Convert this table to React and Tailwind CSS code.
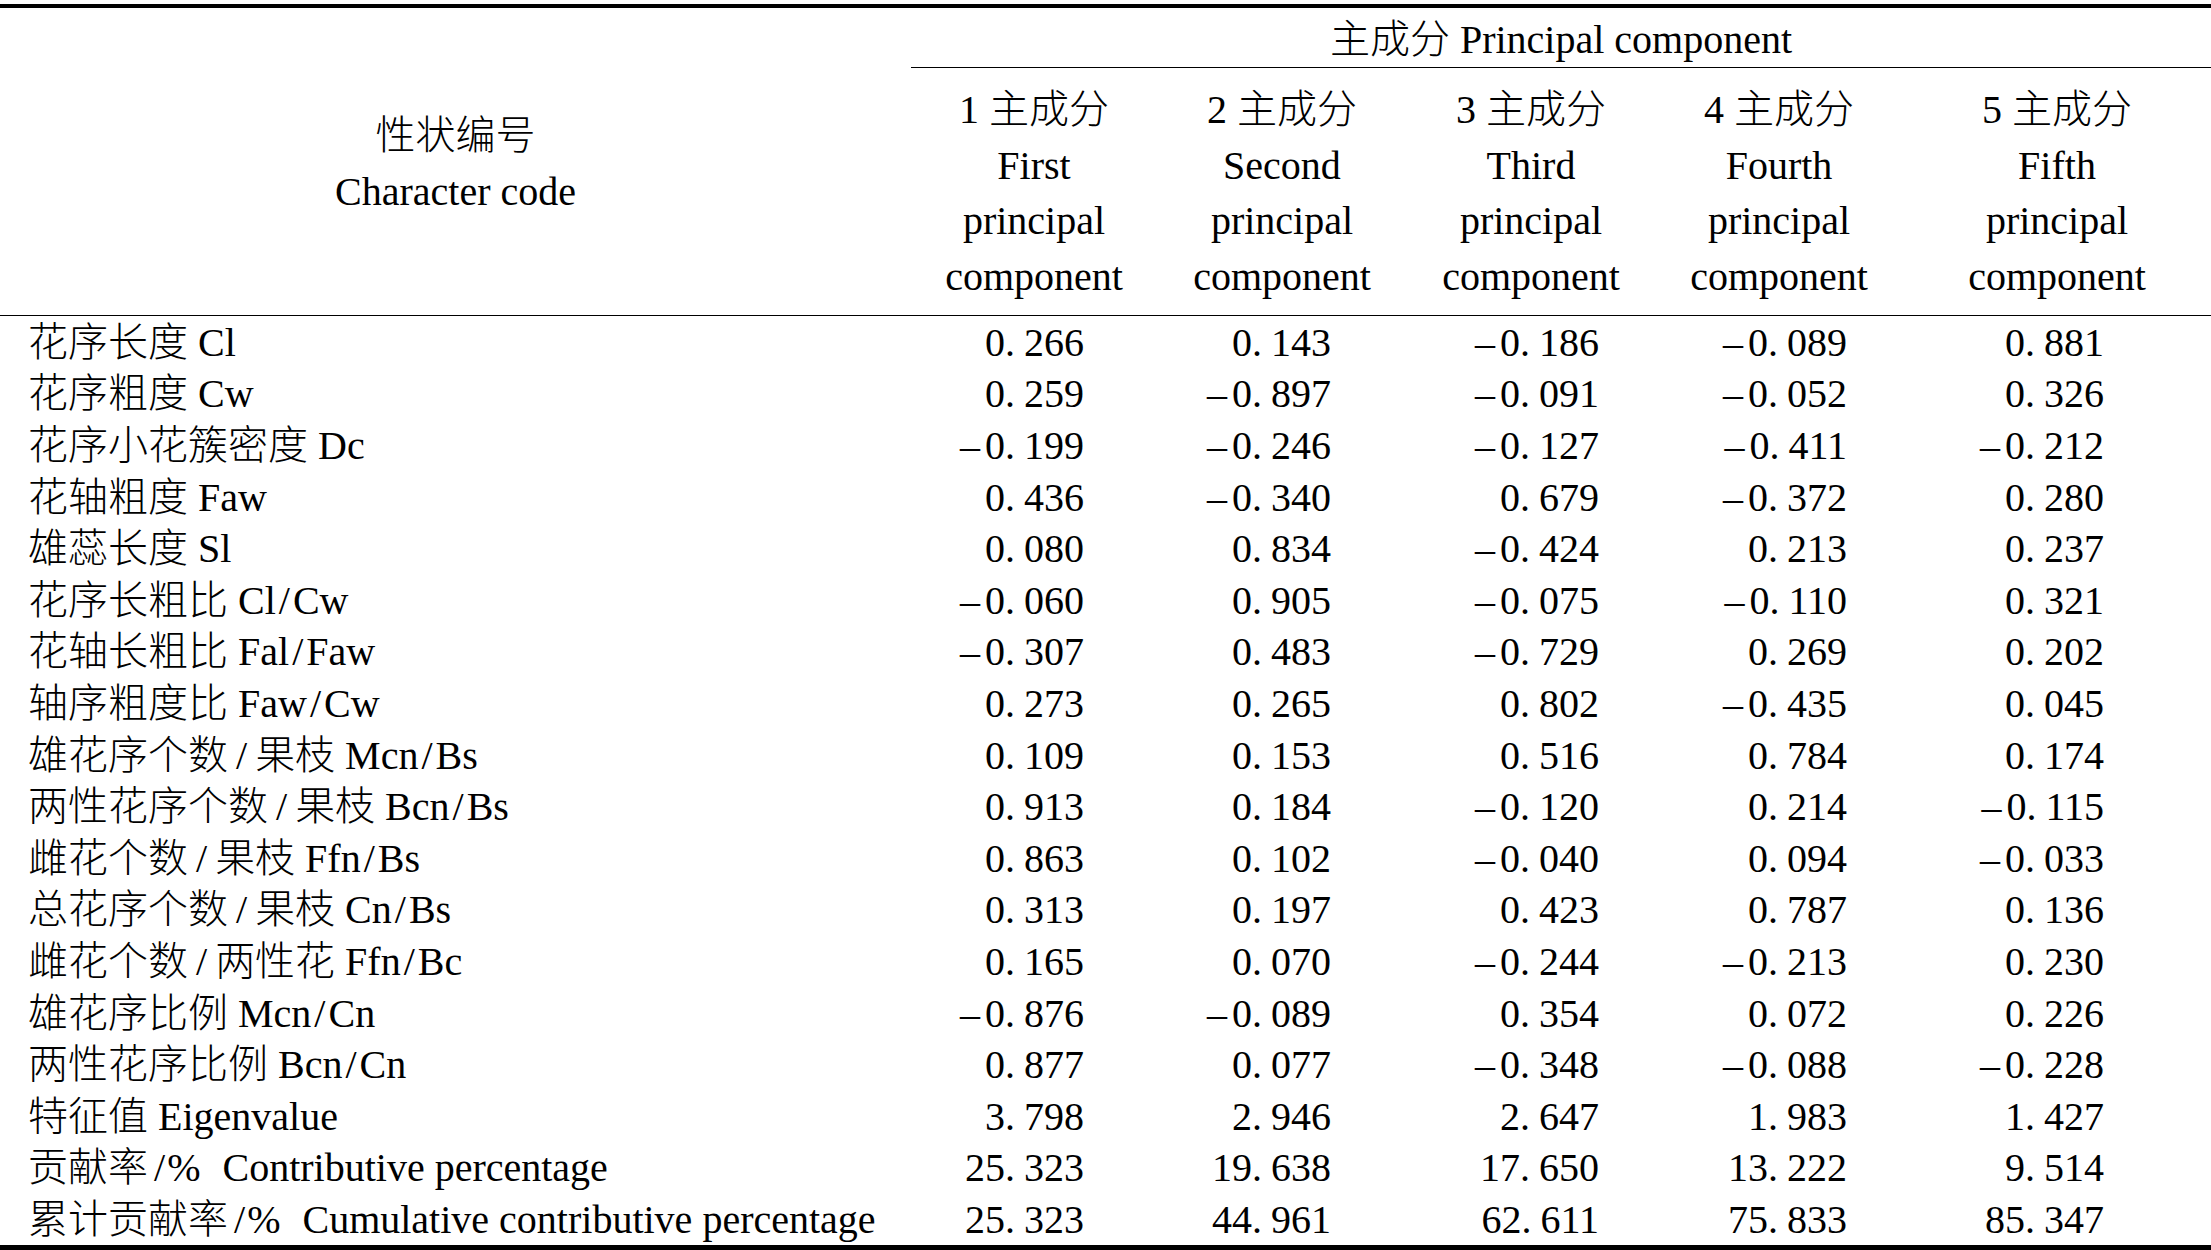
import React from "react";

const rows = [
  ["花序长度 Cl", "0.266", "0.143", "-0.186", "-0.089", "0.881"],
  ["花序粗度 Cw", "0.259", "-0.897", "-0.091", "-0.052", "0.326"],
  ["花序小花簇密度 Dc", "-0.199", "-0.246", "-0.127", "-0.411", "-0.212"],
  ["花轴粗度 Faw", "0.436", "-0.340", "0.679", "-0.372", "0.280"],
  ["雄蕊长度 Sl", "0.080", "0.834", "-0.424", "0.213", "0.237"],
  ["花序长粗比 Cl/Cw", "-0.060", "0.905", "-0.075", "-0.110", "0.321"],
  ["花轴长粗比 Fal/Faw", "-0.307", "0.483", "-0.729", "0.269", "0.202"],
  ["轴序粗度比 Faw/Cw", "0.273", "0.265", "0.802", "-0.435", "0.045"],
  ["雄花序个数/果枝 Mcn/Bs", "0.109", "0.153", "0.516", "0.784", "0.174"],
  ["两性花序个数/果枝 Bcn/Bs", "0.913", "0.184", "-0.120", "0.214", "-0.115"],
  ["雌花个数/果枝 Ffn/Bs", "0.863", "0.102", "-0.040", "0.094", "-0.033"],
  ["总花序个数/果枝 Cn/Bs", "0.313", "0.197", "0.423", "0.787", "0.136"],
  ["雌花个数/两性花 Ffn/Bc", "0.165", "0.070", "-0.244", "-0.213", "0.230"],
  ["雄花序比例 Mcn/Cn", "-0.876", "-0.089", "0.354", "0.072", "0.226"],
  ["两性花序比例 Bcn/Cn", "0.877", "0.077", "-0.348", "-0.088", "-0.228"],
  ["特征值 Eigenvalue", "3.798", "2.946", "2.647", "1.983", "1.427"],
  ["贡献率/% Contributive percentage", "25.323", "19.638", "17.650", "13.222", "9.514"],
  ["累计贡献率/% Cumulative contributive percentage", "25.323", "44.961", "62.611", "75.833", "85.347"],
];

const heads = [
  ["1 主成分", "First"],
  ["2 主成分", "Second"],
  ["3 主成分", "Third"],
  ["4 主成分", "Fourth"],
  ["5 主成分", "Fifth"],
];

// right padding per value column, so the numbers end where the print has them
const pads = ["pr-[73px]", "pr-[76px]", "pr-[56px]", "pr-[56px]", "pr-[107px]"];

const isCjk = (c) => /[\u4e00-\u9fff]/.test(c || "");

// the slash sits wider after chinese text than between latin letters
function Label({ text }) {
  const parts = text.split("/");
  return (
    <span>
      {parts.map((p, i) => {
        let slash = null;
        if (i > 0) {
          let cls = "mx-[3px]";
          if (p.startsWith("%")) cls = "ml-[6px] mr-[2px]";
          else if (isCjk(parts[i - 1].slice(-1))) cls = "mx-[8px]";
          slash = <span className={cls}>/</span>;
        }
        const body = p.startsWith("%") ? (
          <>
            <span className="mr-[12px]">%</span>
            {p.slice(1)}
          </>
        ) : (
          p
        );
        return (
          <React.Fragment key={i}>
            {slash}
            {body}
          </React.Fragment>
        );
      })}
    </span>
  );
}

function Num({ v }) {
  const neg = v.startsWith("-");
  const [a, b] = v.replace("-", "").split(".");
  return (
    <span>
      {neg && <span className="mr-[5px]">–</span>}
      {a}.<span className="ml-[9px]">{b}</span>
    </span>
  );
}

export default function App() {
  return (
    <div className="w-[2211px] h-[1250px] bg-white text-black text-[40px] font-light font-['Liberation_Serif','Noto_Sans_CJK_SC',serif]">
      <div className="h-[4px]" />
      <div className="h-[4px] bg-black" />

      <div className="grid grid-cols-[911px_246px_250px_248px_248px_1fr] grid-rows-[60px_247px]">
        <div className="row-span-2 flex flex-col items-center justify-center pt-[4px] leading-[56px]">
          <div>性状编号</div>
          <div>Character code</div>
        </div>
        <div className="col-span-5 flex items-center justify-center border-b border-black pt-[4px] leading-none">
          主成分 Principal component
        </div>
        {heads.map(([n, w]) => (
          <div key={n} className="flex flex-col items-center justify-center pt-[3px] leading-[55.5px]">
            <div>{n}</div>
            <div>{w}</div>
            <div>principal</div>
            <div>component</div>
          </div>
        ))}
      </div>

      <div className="h-px bg-black" />

      <div className="flex flex-col">
        {rows.map((r) => (
          <div key={r[0]} className="grid grid-cols-[911px_246px_250px_248px_248px_1fr] h-[51.6px] pt-[2px] leading-none">
            <div className="flex items-center pl-[28px] whitespace-nowrap">
              <Label text={r[0]} />
            </div>
            {r.slice(1).map((v, i) => (
              <div key={i} className={`flex items-center justify-end ${pads[i]}`}>
                <Num v={v} />
              </div>
            ))}
          </div>
        ))}
      </div>

      <div className="h-[5px] bg-black" />
    </div>
  );
}
